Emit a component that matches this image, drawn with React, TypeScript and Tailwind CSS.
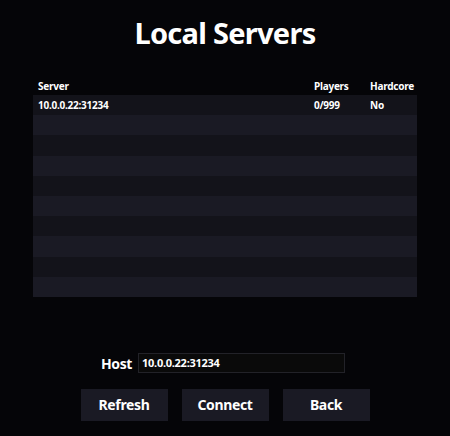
export default function App() {
  const rows = Array.from({ length: 10 });
  return (
    <div className="w-[450px] h-[436px] bg-[#050508] text-white flex flex-col items-center font-bold" style={{ fontFamily: '"Noto Sans", "Open Sans", sans-serif' }}>
      <h1 className="text-[29px] leading-none mt-[18px] h-[40px] tracking-tight">Local Servers</h1>
      <div className="w-[384px] mt-[20px] text-[10px]">
        <div className="flex h-[17px] items-center px-[5px] tracking-tight">
          <div className="flex-1">Server</div>
          <div className="w-[56px]">Players</div>
          <div className="w-[42px]">Hardcore</div>
        </div>
        {rows.map((_, i) => (
          <div key={i} className={`flex h-[20.2px] items-center px-[5px] tracking-tight ${i % 2 === 0 ? "bg-[#13131a]" : "bg-[#1a1a24]"}`}>
            {i === 0 && (
              <>
                <div className="flex-1">10.0.0.22:31234</div>
                <div className="w-[56px]">0/999</div>
                <div className="w-[42px]">No</div>
              </>
            )}
          </div>
        ))}
      </div>
      <div className="flex items-center mt-[56px] gap-[6px] ml-[-4px]">
        <span className="text-[14px] tracking-tight">Host</span>
        <div className="w-[207px] h-[20px] bg-[#0a0a0a] border border-[#222228] flex items-center px-[3px] text-[11px] tracking-tight">10.0.0.22:31234</div>
      </div>
      <div className="flex gap-[14px] mt-[15px]">
        {["Refresh", "Connect", "Back"].map((t) => (
          <div key={t} className="w-[87px] h-[32px] bg-[#1a1a24] flex items-center justify-center text-[14px] tracking-tight">{t}</div>
        ))}
      </div>
    </div>
  );
}
